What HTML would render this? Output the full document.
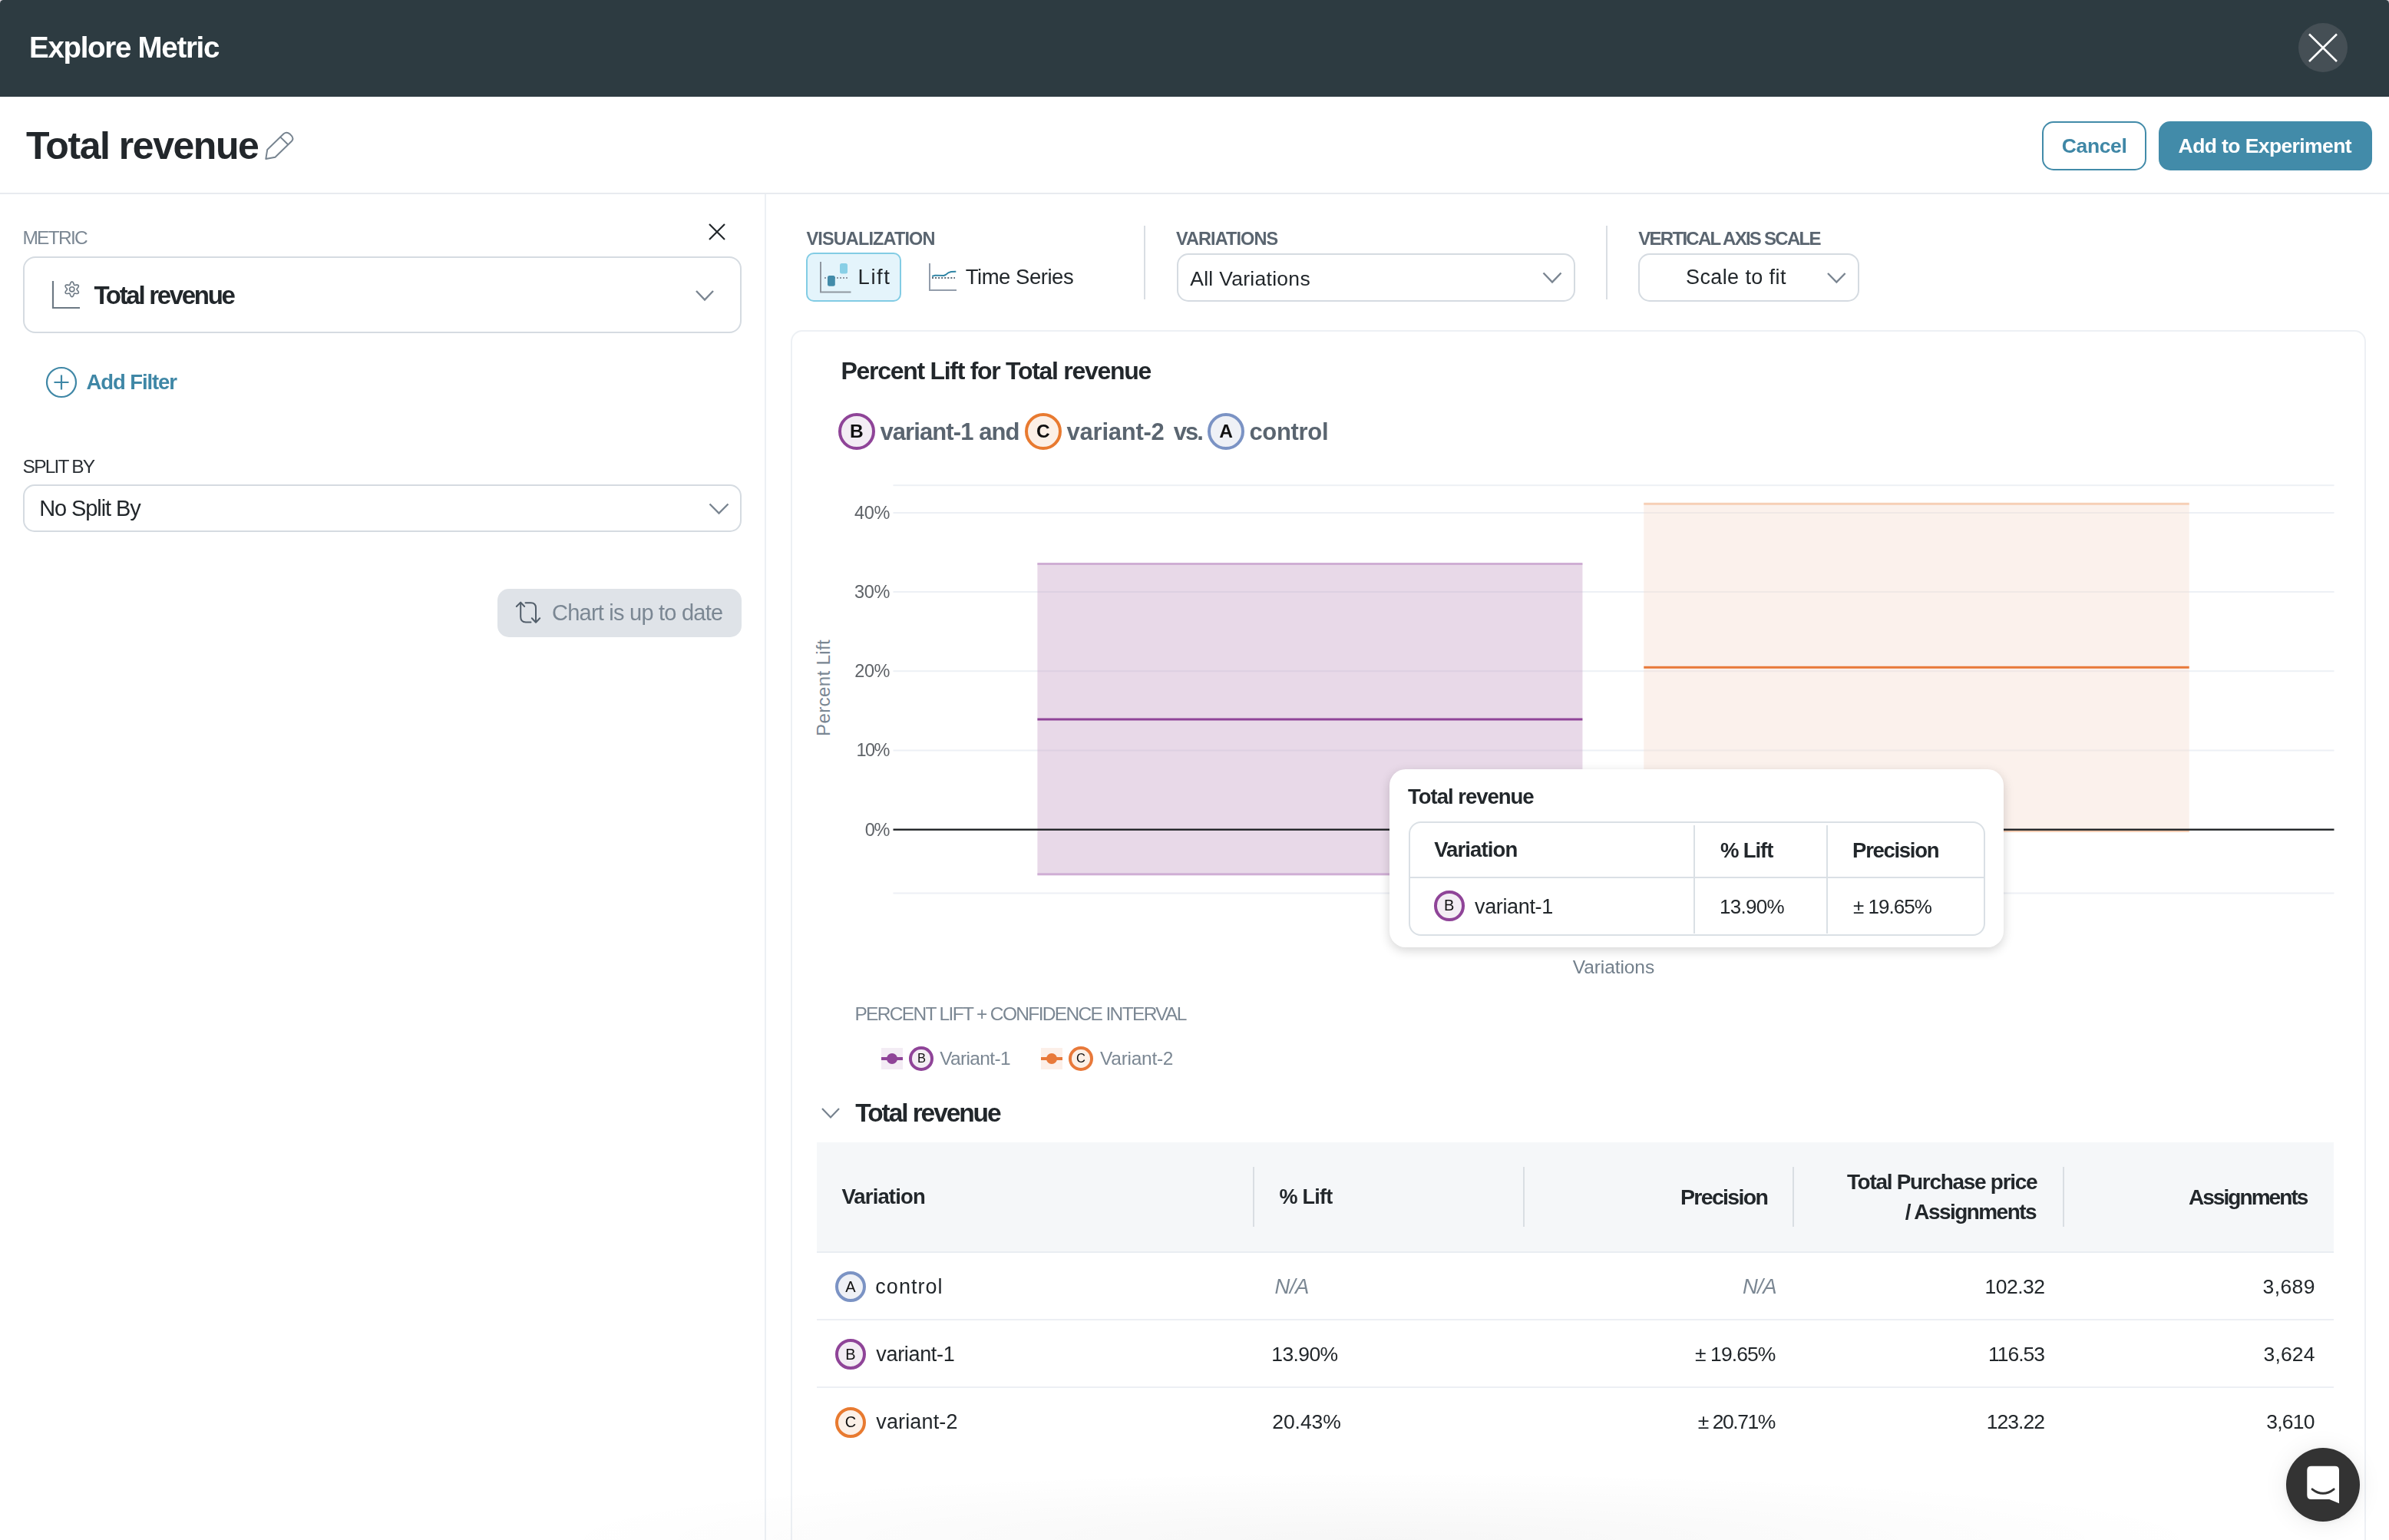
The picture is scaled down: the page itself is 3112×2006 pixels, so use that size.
<!DOCTYPE html>
<html><head><meta charset="utf-8"><title>Explore Metric</title>
<style>
html,body{margin:0;padding:0;background:#fff;}
body{width:3112px;height:2006px;overflow:hidden;position:relative;font-family:"Liberation Sans",sans-serif;}
#root{position:absolute;left:0;top:0;width:3112px;height:2006px;overflow:hidden;background:#dcd6dc;}
.t{position:absolute;white-space:nowrap;}
#tx{position:absolute;left:0;top:0;width:3112px;height:2006px;will-change:transform;}
.a{position:absolute;box-sizing:border-box;}
svg{position:absolute;overflow:visible;}
@media (max-width:2000px){#root{zoom:0.5;}}

</style></head><body>
<div id="root">
<!-- header -->
<div class="a" style="left:0;top:120px;width:3112px;height:1886px;background:#fff;"></div>
<div class="a" style="left:0;top:0;width:3112px;height:126px;background:#2d3b41;border-radius:4.5px 4.5px 0 0;"></div>
<div class="a" style="left:2994px;top:30px;width:64px;height:64px;border-radius:50%;background:#454f55;"></div>
<svg style="left:0;top:0" width="3112" height="126"><path d="M3008 44.5 L3044 80 M3044 44.5 L3008 80" stroke="#fff" stroke-width="2.6" fill="none"/></svg>
<!-- title separator -->
<div class="a" style="left:0;top:251px;width:3112px;height:2px;background:#e8ebef;"></div>
<!-- pencil -->
<svg style="left:0;top:0" width="400" height="260"><g fill="none" stroke="#76838f" stroke-width="1.9" stroke-linejoin="round" stroke-linecap="round"><path d="M346.3 207 L348.2 195 L369.5 174.3 Q373.5 171 377.5 174.5 L379.8 176.8 Q383 180.5 379.8 184 L358.5 204.8 Z"/><path d="M365.3 178.6 L374.6 187.8"/></g></svg>
<!-- buttons -->
<div class="a" style="left:2660px;top:158px;width:136px;height:63.5px;border:2.2px solid #428ba9;border-radius:15px;"></div>
<div class="a" style="left:2812px;top:158px;width:278px;height:63.5px;background:#428ba9;border-radius:15px;"></div>
<!-- left panel separator -->
<div class="a" style="left:996px;top:253px;width:2px;height:1753px;background:#ecf0f4;"></div>
<div class="a" style="left:648px;top:766.5px;width:318px;height:63px;background:#dfe3e8;border-radius:15px;"></div>
<!-- metric close -->
<svg style="left:0;top:0" width="1000" height="800"><path d="M924 292 L944 312 M944 292 L924 312" stroke="#22272b" stroke-width="2.2" fill="none"/></svg>
<!-- metric select -->
<div class="a" style="left:30px;top:334px;width:936px;height:100px;border:2px solid #d5dbe1;border-radius:16px;"></div>
<svg style="left:0;top:0" width="1000" height="800"><g fill="none" stroke="#6d7984" stroke-width="2.2"><path d="M69 366 L69 401 L104 401"/></g>
<g fill="none" stroke="#6d7984" stroke-width="1.6"><circle cx="93.75" cy="376.8" r="3.1"/><path d="M99.95 376.80 L100.17 376.24 L100.74 375.57 L101.48 374.73 L102.11 373.76 L102.41 372.76 L102.24 371.90 L101.58 371.32 L100.57 371.08 L99.41 371.14 L98.31 371.36 L97.44 371.52 L96.85 371.43 L96.47 370.96 L96.18 370.13 L95.82 369.07 L95.30 368.04 L94.58 367.28 L93.75 367.00 L92.92 367.28 L92.20 368.04 L91.68 369.07 L91.32 370.13 L91.03 370.96 L90.65 371.43 L90.06 371.52 L89.19 371.36 L88.09 371.14 L86.93 371.08 L85.92 371.32 L85.26 371.90 L85.09 372.76 L85.39 373.76 L86.02 374.73 L86.76 375.57 L87.33 376.24 L87.55 376.80 L87.33 377.36 L86.76 378.03 L86.02 378.87 L85.39 379.84 L85.09 380.84 L85.26 381.70 L85.92 382.28 L86.93 382.52 L88.09 382.46 L89.19 382.24 L90.06 382.08 L90.65 382.17 L91.03 382.64 L91.32 383.47 L91.68 384.53 L92.20 385.56 L92.92 386.32 L93.75 386.60 L94.58 386.32 L95.30 385.56 L95.82 384.53 L96.18 383.47 L96.47 382.64 L96.85 382.17 L97.44 382.08 L98.31 382.24 L99.41 382.46 L100.57 382.52 L101.58 382.28 L102.24 381.70 L102.41 380.84 L102.11 379.84 L101.48 378.87 L100.74 378.03 L100.17 377.36 L99.95 376.80Z"/></g>
<path d="M907 379 L918 390.5 L929 379" fill="none" stroke="#7a8591" stroke-width="2.4"/>
<!-- add filter -->
<circle cx="80" cy="498" r="19" fill="none" stroke="#3f87a6" stroke-width="2.2"/>
<path d="M70.5 498 L89.5 498 M80 488.5 L80 507.5" stroke="#3f87a6" stroke-width="2.2"/>
<!-- split select chevron -->
<path d="M924.5 656.5 L936.5 668.5 L948.5 656.5" fill="none" stroke="#7a8591" stroke-width="2.4"/>
<!-- refresh icon -->
<g fill="none" stroke="#525e6a" stroke-width="2" stroke-linecap="round" stroke-linejoin="round">
<path d="M672.8 790 L678.2 784.6 L683.2 790 M678.2 785.5 L678.2 803.5 Q678.2 810.4 685 810.4 L691.5 810.4"/>
<path d="M684.5 785.3 L691.5 785.3 Q698 785.3 698 792 L698 810.5 M692.8 805.3 L698 810.8 L703.2 805.3"/>
</g>
</svg>
<div class="a" style="left:30px;top:630.5px;width:936px;height:62.5px;border:2px solid #d5dbe1;border-radius:15px;"></div>
<!-- toolbar -->
<div class="a" style="left:1050px;top:329px;width:123.5px;height:63.5px;background:#e4f4fb;border:2px solid #82cce4;border-radius:10px;"></div>
<div class="a" style="left:1489.6px;top:294px;width:2px;height:95.5px;background:#d9dee3;"></div>
<div class="a" style="left:2091.7px;top:294px;width:2px;height:95.5px;background:#d9dee3;"></div>
<div class="a" style="left:1532.5px;top:329.5px;width:519px;height:63px;border:2px solid #d5dbe1;border-radius:15px;"></div>
<div class="a" style="left:2134.3px;top:329.5px;width:287.5px;height:63px;border:2px solid #d5dbe1;border-radius:15px;"></div>
<svg style="left:0;top:0" width="3112" height="500">
<g fill="none" stroke="#8f97a0" stroke-width="2"><path d="M1069 341 L1069 380.5 L1108.5 380.5"/></g>
<rect x="1094" y="343" width="10" height="13.5" rx="2.5" fill="#88cfe6"/>
<path d="M1074 362 L1105 362" stroke="#8f97a2" stroke-width="2" stroke-dasharray="2 2" fill="none"/>
<rect x="1078" y="359" width="9.8" height="13.7" rx="2.5" fill="#428ba9"/>
<g fill="none" stroke="#939dab" stroke-width="2"><path d="M1211 343 L1211 378 L1246 378"/></g>
<path d="M1214.2 360 L1218.2 358.6 L1229.4 359 L1231.8 358 L1235.7 355.1 L1239 354 L1245.3 353.8" stroke="#2f84a4" stroke-width="1.9" fill="none" stroke-linejoin="round"/>
<path d="M1214 362 L1244 362" stroke="#5d6a76" stroke-width="2" stroke-dasharray="2 2.06" fill="none"/>
<path d="M2010.5 355.5 L2022 367.5 L2033.5 355.5" fill="none" stroke="#7a8591" stroke-width="2.4"/>
<path d="M2381 356 L2392.3 367.5 L2403.6 356" fill="none" stroke="#7a8591" stroke-width="2.4"/>
</svg>
<!-- card -->
<div class="a" style="left:1030px;top:430px;width:2052px;height:1700px;border:2px solid #edf0f4;border-radius:15px;"></div>
<!-- badges in subtitle -->
<div class="a" style="left:1092px;top:538px;width:48px;height:48px;border-radius:50%;border:4.4px solid #8f4498;background:#f3edf4;"></div>
<div class="a" style="left:1335.4px;top:538px;width:48px;height:48px;border-radius:50%;border:4.4px solid #e87a30;background:#fcf0e7;"></div>
<div class="a" style="left:1573.3px;top:538px;width:48px;height:48px;border-radius:50%;border:4.4px solid #7b93c4;background:#eff1f6;"></div>
<!-- chart -->
<svg style="left:0;top:0" width="3112" height="1300">
<g fill="#edf0f5">
<rect x="1163.5" y="631.2" width="1877" height="2"/>
<rect x="1163.5" y="667" width="1877" height="2"/>
<rect x="1163.5" y="770" width="1877" height="2"/>
<rect x="1163.5" y="873.2" width="1877" height="2"/>
<rect x="1163.5" y="976.5" width="1877" height="2"/>
<rect x="1163.5" y="1162.5" width="1877" height="2"/>
</g>
<rect x="1351.4" y="733.5" width="710" height="406.5" fill="#c9a4c8" fill-opacity="0.42"/>
<rect x="1351.4" y="733" width="710" height="3" fill="#cfaed4"/>
<rect x="1351.4" y="1137.3" width="710" height="3" fill="#cfaed4"/>
<rect x="1351.4" y="935.5" width="710" height="3" fill="#8f4498"/>
<rect x="2141.3" y="655" width="710.4" height="428.5" fill="#f4dacd" fill-opacity="0.38"/>
<rect x="2141.3" y="654.8" width="710.4" height="3" fill="#f6cfb6"/>
<rect x="2141.3" y="1081" width="710.4" height="3" fill="#f6cfb6"/>
<rect x="2141.3" y="867.8" width="710.4" height="3" fill="#e8793a"/>
<rect x="1163.5" y="1079.5" width="1877" height="2.3" fill="#1a1d20"/>
</svg>
<!-- rotated axis label -->
<div class="t" id="plift" style="left:1010.5px;top:882px;width:124px;height:30px;transform:rotate(-90deg);font-size:24.2px;letter-spacing:0.3px;line-height:30px;color:#7a8793;text-align:center;">Percent Lift</div>
<!-- tooltip -->
<div class="a" style="left:1810px;top:1002px;width:800.3px;height:232px;background:#fff;border-radius:21px;box-shadow:0 4px 14px rgba(0,0,0,0.17);"></div>
<div class="a" style="left:1834.5px;top:1069.6px;width:751px;height:149px;border:2px solid #dae0e5;border-radius:16px;"></div>
<div class="a" style="left:1835px;top:1142px;width:750px;height:2px;background:#dae0e5;"></div>
<div class="a" style="left:2206px;top:1075px;width:2px;height:141px;background:#dae0e5;"></div>
<div class="a" style="left:2379px;top:1075px;width:2px;height:141px;background:#dae0e5;"></div>
<div class="a" style="left:1868.2px;top:1160.2px;width:39.5px;height:39.5px;border-radius:50%;border:4.1px solid #8f4498;background:#f3edf4;"></div>
<!-- legend -->
<div class="a" style="left:1148px;top:1365px;width:28px;height:28px;background:#f3ecf4;"></div>
<div class="a" style="left:1148px;top:1376.5px;width:28px;height:4.4px;background:#8f4498;"></div>
<div class="a" style="left:1155px;top:1371.6px;width:14px;height:14px;border-radius:50%;background:#8f4498;"></div>
<div class="a" style="left:1184.1px;top:1363.2px;width:31.6px;height:31.6px;border-radius:50%;border:4.2px solid #8f4498;background:#f3edf4;"></div>
<div class="a" style="left:1356px;top:1365px;width:28px;height:28px;background:#fcefe8;"></div>
<div class="a" style="left:1356px;top:1376.5px;width:28px;height:4.4px;background:#e8793a;"></div>
<div class="a" style="left:1363px;top:1371.6px;width:14px;height:14px;border-radius:50%;background:#e8793a;"></div>
<div class="a" style="left:1392.1px;top:1363.2px;width:31.6px;height:31.6px;border-radius:50%;border:4.2px solid #e8793a;background:#fcf0e7;"></div>
<!-- section chevron -->
<svg style="left:0;top:0" width="1200" height="1500"><path d="M1071 1444 L1082 1455.5 L1093 1444" fill="none" stroke="#76828e" stroke-width="2.2"/></svg>
<!-- table -->
<div class="a" style="left:1064px;top:1488px;width:1975.5px;height:142.5px;background:#f5f7f9;"></div>
<div class="a" style="left:1064px;top:1629.5px;width:1975.5px;height:2px;background:#e9edf2;"></div>
<div class="a" style="left:1631.8px;top:1520px;width:2px;height:78px;background:#d9dee3;"></div>
<div class="a" style="left:1984px;top:1520px;width:2px;height:78px;background:#d9dee3;"></div>
<div class="a" style="left:2335px;top:1520px;width:2px;height:78px;background:#d9dee3;"></div>
<div class="a" style="left:2687px;top:1520px;width:2px;height:78px;background:#d9dee3;"></div>
<div class="a" style="left:1064px;top:1717.6px;width:1975.5px;height:2px;background:#eceff4;"></div>
<div class="a" style="left:1064px;top:1806px;width:1975.5px;height:2px;background:#eceff4;"></div>
<div class="a" style="left:1088.2px;top:1656.1px;width:40px;height:40px;border-radius:50%;border:4px solid #7b93c4;background:#eff1f6;"></div>
<div class="a" style="left:1088.2px;top:1744.3px;width:40px;height:40px;border-radius:50%;border:4px solid #8f4498;background:#f3edf4;"></div>
<div class="a" style="left:1088.2px;top:1832.5px;width:40px;height:40px;border-radius:50%;border:4px solid #e87a30;background:#fcf0e7;"></div>
<!-- bottom shade -->
<div class="a" style="left:0;top:1900px;width:3112px;height:106px;background:radial-gradient(ellipse 1100px 90px at 1800px 106px,rgba(0,0,0,0.035),rgba(0,0,0,0));"></div>
<!-- chat button -->
<div class="a" style="left:2978.3px;top:1886.2px;width:95.5px;height:95.5px;border-radius:50%;background:#333333;box-shadow:0 1px 6px rgba(0,0,0,0.06),0 2px 32px rgba(0,0,0,0.08);"></div>
<svg style="left:0;top:0" width="3112" height="2006"><path d="M3010.8 1909.7 L3041.6 1909.7 Q3047 1909.7 3047 1915.1 L3047 1958.2 L3034.3 1953.1 L3010.8 1953.1 Q3005.3 1953.1 3005.3 1947.6 L3005.3 1915.1 Q3005.3 1909.7 3010.8 1909.7 Z" fill="#fff"/><path d="M3012 1939.8 Q3026.1 1950.8 3040.2 1939.8" fill="none" stroke="#333" stroke-width="2.8" stroke-linecap="round"/></svg>

<div id="tx">
<div class="t" style="left:38px;top:36.5px;font-size:38.5px;line-height:49px;color:#ffffff;font-weight:700;letter-spacing:-1.3px;">Explore Metric</div>
<div class="t" style="left:34px;top:159px;font-size:50.0px;line-height:63px;color:#22272b;font-weight:700;letter-spacing:-1.465px;">Total revenue</div>
<div class="t" style="left:2685.8px;top:172.9px;font-size:26.5px;line-height:34px;color:#3f87a6;font-weight:700;letter-spacing:-0.388px;">Cancel</div>
<div class="t" style="left:2837.6px;top:172.9px;font-size:26.5px;line-height:34px;color:#ffffff;font-weight:700;letter-spacing:-0.597px;">Add to Experiment</div>
<div class="t" style="left:29.4px;top:294.2px;font-size:24.5px;line-height:31px;color:#7b8793;letter-spacing:-1.723px;">METRIC</div>
<div class="t" style="left:122.4px;top:363.6px;font-size:33.0px;line-height:42px;color:#22272b;font-weight:700;letter-spacing:-2.297px;">Total revenue</div>
<div class="t" style="left:112.4px;top:480px;font-size:27.5px;line-height:35px;color:#3f87a6;font-weight:700;letter-spacing:-1.081px;">Add Filter</div>
<div class="t" style="left:29.6px;top:592.2px;font-size:24.5px;line-height:31px;color:#2b3035;letter-spacing:-1.79px;">SPLIT BY</div>
<div class="t" style="left:51.2px;top:643.8px;font-size:29.0px;line-height:37px;color:#22272b;letter-spacing:-1.094px;">No Split By</div>
<div class="t" style="left:719px;top:779.9px;font-size:29.0px;line-height:37px;color:#7b8793;letter-spacing:-0.769px;">Chart is up to date</div>
<div class="t" style="left:1050.5px;top:295.7px;font-size:23.5px;line-height:30px;color:#5a6570;font-weight:700;letter-spacing:-0.871px;">VISUALIZATION</div>
<div class="t" style="left:1117.5px;top:343px;font-size:27.5px;line-height:35px;color:#22272b;letter-spacing:1.585px;">Lift</div>
<div class="t" style="left:1257.7px;top:343px;font-size:27.5px;line-height:35px;color:#22272b;letter-spacing:-0.473px;">Time Series</div>
<div class="t" style="left:1532px;top:295.9px;font-size:23.5px;line-height:30px;color:#5a6570;font-weight:700;letter-spacing:-0.918px;">VARIATIONS</div>
<div class="t" style="left:1550.2px;top:345.7px;font-size:26.5px;line-height:34px;color:#22272b;letter-spacing:0.29px;">All Variations</div>
<div class="t" style="left:2134.3px;top:296px;font-size:24.0px;line-height:30px;color:#5a6570;font-weight:700;letter-spacing:-1.732px;">VERTICAL AXIS SCALE</div>
<div class="t" style="left:2196px;top:344.4px;font-size:27.0px;line-height:34px;color:#22272b;letter-spacing:0.395px;">Scale to fit</div>
<div class="t" style="left:1095.5px;top:462.6px;font-size:32.0px;line-height:40px;color:#22272b;font-weight:700;letter-spacing:-1.288px;">Percent Lift for Total revenue</div>
<div class="t" style="left:1146.4px;top:543.3px;font-size:31px;line-height:39px;color:#5a6570;font-weight:700;letter-spacing:-0.901px;">variant-1 and</div>
<div class="t" style="left:1389.6px;top:543.3px;font-size:31px;line-height:39px;color:#5a6570;font-weight:700;letter-spacing:-0.248px;">variant-2</div>
<div class="t" style="left:1528.8px;top:543.3px;font-size:31px;line-height:39px;color:#5a6570;font-weight:700;letter-spacing:-1.991px;">vs.</div>
<div class="t" style="left:1627.4px;top:543.3px;font-size:31px;line-height:39px;color:#5a6570;font-weight:700;letter-spacing:-0.323px;">control</div>
<div class="t" style="left:1113.1px;top:652.85px;font-size:23.5px;line-height:30px;color:#5f6368;letter-spacing:-0.32px;">40%</div>
<div class="t" style="left:1112.9px;top:755.85px;font-size:23.5px;line-height:30px;color:#5f6368;letter-spacing:-0.22px;">30%</div>
<div class="t" style="left:1113.3px;top:859.05px;font-size:23.5px;line-height:30px;color:#5f6368;letter-spacing:-0.42px;">20%</div>
<div class="t" style="left:1115.6px;top:962.35px;font-size:23.5px;line-height:30px;color:#5f6368;letter-spacing:-1.57px;">10%</div>
<div class="t" style="left:1126.7px;top:1065.75px;font-size:23.5px;line-height:30px;color:#5f6368;letter-spacing:-1.17px;">0%</div>
<div class="t" style="left:2048.7px;top:1243.9px;font-size:24.5px;line-height:31px;color:#727f8b;letter-spacing:-0.075px;">Variations</div>
<div class="t" style="left:1834px;top:1020.1px;font-size:27.5px;line-height:35px;color:#22272b;font-weight:700;letter-spacing:-1.014px;">Total revenue</div>
<div class="t" style="left:1868.2px;top:1089px;font-size:27.5px;line-height:35px;color:#22272b;font-weight:700;letter-spacing:-0.894px;">Variation</div>
<div class="t" style="left:2240.9px;top:1089.5px;font-size:27.5px;line-height:35px;color:#22272b;font-weight:700;letter-spacing:-1.078px;">% Lift</div>
<div class="t" style="left:2413.1px;top:1089.5px;font-size:27.5px;line-height:35px;color:#22272b;font-weight:700;letter-spacing:-1.301px;">Precision</div>
<div class="t" style="left:1921px;top:1163.5px;font-size:27px;line-height:34px;color:#22272b;letter-spacing:-0.354px;">variant-1</div>
<div class="t" style="left:2239.9px;top:1164.8px;font-size:26.0px;line-height:33px;color:#22272b;letter-spacing:-0.673px;">13.90%</div>
<div class="t" style="left:2414.1px;top:1164.8px;font-size:26.0px;line-height:33px;color:#22272b;letter-spacing:-0.994px;">± 19.65%</div>
<div class="t" style="left:1113.4px;top:1305.3px;font-size:24.5px;line-height:31px;color:#7b8793;letter-spacing:-1.654px;">PERCENT LIFT + CONFIDENCE INTERVAL</div>
<div class="t" style="left:1224.2px;top:1363px;font-size:24.5px;line-height:31px;color:#7b8793;letter-spacing:-0.646px;">Variant-1</div>
<div class="t" style="left:1433.1px;top:1363px;font-size:24.5px;line-height:31px;color:#7b8793;letter-spacing:-0.283px;">Variant-2</div>
<div class="t" style="left:1114.3px;top:1429px;font-size:33.5px;line-height:42px;color:#22272b;font-weight:700;letter-spacing:-2.083px;">Total revenue</div>
<div class="t" style="left:1096.4px;top:1541.2px;font-size:27.5px;line-height:35px;color:#22272b;font-weight:700;letter-spacing:-0.856px;">Variation</div>
<div class="t" style="left:1666.6px;top:1541.9px;font-size:27.0px;line-height:34px;color:#22272b;font-weight:700;letter-spacing:-0.779px;">% Lift</div>
<div class="t" style="left:2188.9px;top:1540.7px;font-size:28.5px;line-height:36px;color:#22272b;font-weight:700;letter-spacing:-1.65px;">Precision</div>
<div class="t" style="left:2405.9px;top:1522.1px;font-size:28.0px;line-height:35px;color:#22272b;font-weight:700;letter-spacing:-1.299px;">Total Purchase price</div>
<div class="t" style="left:2481.8px;top:1561.2px;font-size:28px;line-height:35px;color:#22272b;font-weight:700;letter-spacing:-1.551px;">/ Assignments</div>
<div class="t" style="left:2850.9px;top:1541.7px;font-size:28px;line-height:35px;color:#22272b;font-weight:700;letter-spacing:-1.935px;">Assignments</div>
<div class="t" style="left:1140.3px;top:1658.9px;font-size:27px;line-height:34px;color:#22272b;letter-spacing:1.043px;">control</div>
<div class="t" style="left:1660.5px;top:1657.9px;font-size:27.5px;line-height:35px;color:#7b8793;font-style:italic;letter-spacing:-0.45px;">N/A</div>
<div class="t" style="left:2270.0px;top:1657.9px;font-size:27.5px;line-height:35px;color:#7b8793;font-style:italic;letter-spacing:-0.6px;">N/A</div>
<div class="t" style="left:2585.4px;top:1658.9px;font-size:26.5px;line-height:34px;color:#22272b;letter-spacing:-0.483px;">102.32</div>
<div class="t" style="left:2947.6px;top:1658.9px;font-size:26.5px;line-height:34px;color:#22272b;letter-spacing:0.381px;">3,689</div>
<div class="t" style="left:1141.3px;top:1747px;font-size:27px;line-height:34px;color:#22272b;letter-spacing:-0.329px;">variant-1</div>
<div class="t" style="left:1656.3px;top:1747px;font-size:26.5px;line-height:34px;color:#22272b;letter-spacing:-0.623px;">13.90%</div>
<div class="t" style="left:2208.0px;top:1747px;font-size:26.5px;line-height:34px;color:#22272b;letter-spacing:-0.917px;">± 19.65%</div>
<div class="t" style="left:2590.0px;top:1747px;font-size:26.5px;line-height:34px;color:#22272b;letter-spacing:-1.01px;">116.53</div>
<div class="t" style="left:2948.6px;top:1747px;font-size:26.5px;line-height:34px;color:#22272b;letter-spacing:0.131px;">3,624</div>
<div class="t" style="left:1141.3px;top:1835px;font-size:27px;line-height:34px;color:#22272b;letter-spacing:0.134px;">variant-2</div>
<div class="t" style="left:1657.3px;top:1835px;font-size:26.5px;line-height:34px;color:#22272b;letter-spacing:-0.083px;">20.43%</div>
<div class="t" style="left:2211.8px;top:1835px;font-size:26.5px;line-height:34px;color:#22272b;letter-spacing:-1.46px;">± 20.71%</div>
<div class="t" style="left:2587.7px;top:1835px;font-size:26.5px;line-height:34px;color:#22272b;letter-spacing:-0.943px;">123.22</div>
<div class="t" style="left:2952.2px;top:1835px;font-size:26.5px;line-height:34px;color:#22272b;letter-spacing:-0.769px;">3,610</div>
<div class="t" style="left:1107.0px;top:546px;font-size:24.5px;line-height:31px;color:#111;font-weight:700;">B</div>
<div class="t" style="left:1349.9px;top:546px;font-size:24.5px;line-height:31px;color:#111;font-weight:700;">C</div>
<div class="t" style="left:1588.3px;top:546px;font-size:24.5px;line-height:31px;color:#111;font-weight:700;">A</div>
<div class="t" style="left:1881.0px;top:1167.4px;font-size:20.0px;line-height:25px;color:#111;">B</div>
<div class="t" style="left:1194.9px;top:1368.1px;font-size:16.5px;line-height:21px;color:#111;">B</div>
<div class="t" style="left:1402.0px;top:1368.1px;font-size:16.5px;line-height:21px;color:#111;">C</div>
<div class="t" style="left:1101.2px;top:1664px;font-size:20.0px;line-height:25px;color:#111;">A</div>
<div class="t" style="left:1101.2px;top:1752.2px;font-size:20.0px;line-height:25px;color:#111;">B</div>
<div class="t" style="left:1100.7px;top:1840.4px;font-size:20.0px;line-height:25px;color:#111;">C</div>
</div>
</div>
</body></html>
